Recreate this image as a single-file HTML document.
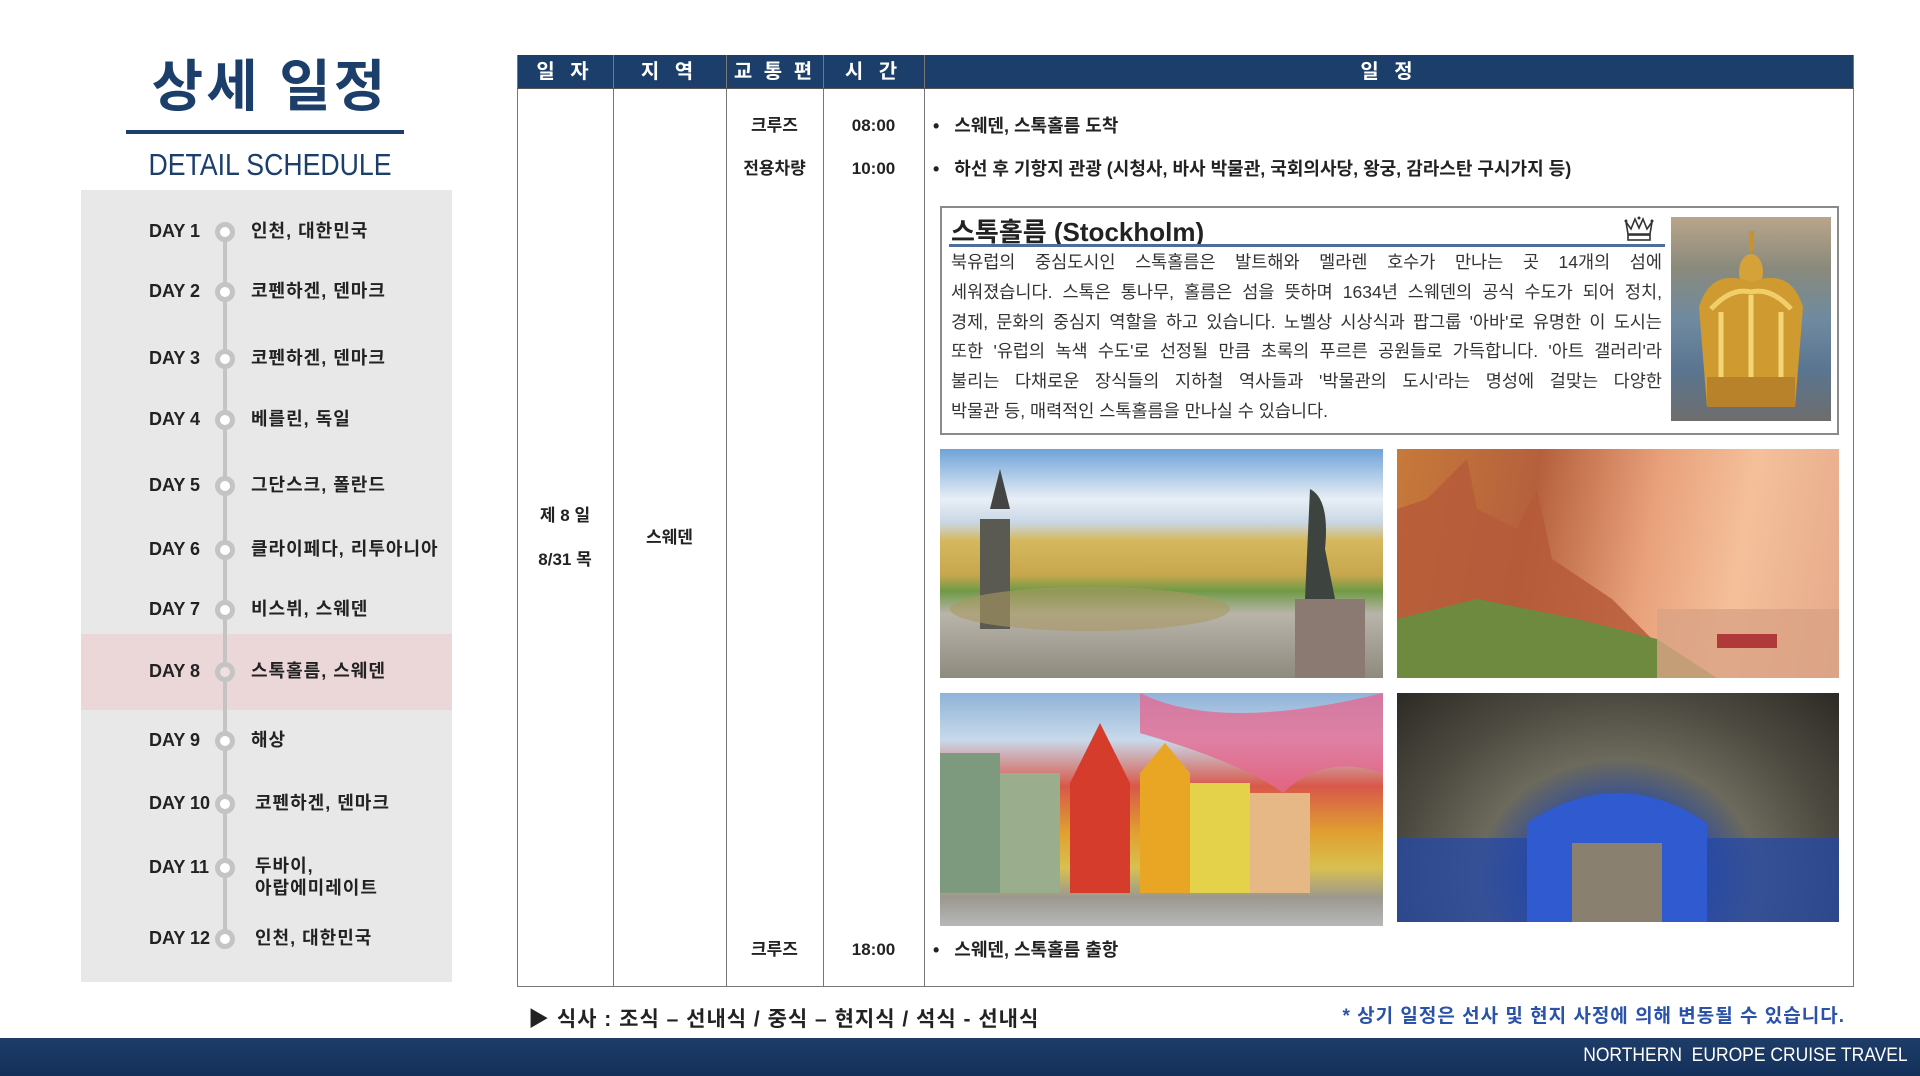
<!DOCTYPE html>
<html><head><meta charset="utf-8"><style>
*{margin:0;padding:0;box-sizing:border-box}
body{width:1920px;height:1076px;background:#fff;position:relative;overflow:hidden;font-family:"Liberation Sans","Noto Sans CJK KR",sans-serif;color:#222}
.a{position:absolute}
.title{left:60px;width:420px;top:52px;text-align:center;font-size:56px;font-weight:bold;color:#1c3e6a;letter-spacing:3px;line-height:70px}
.ul{left:126px;top:130px;width:278px;height:4px;background:#1c3e6a}
.sub{left:60px;width:420px;top:147px;text-align:center;font-size:31px;color:#1c3e6a;transform:scaleX(0.86);line-height:36px}
.panel{left:81px;top:190px;width:371px;height:792px;background:#e8e8e8}
.hl{left:81px;top:634px;width:371px;height:76px;background:#ebd6d8}
.vline{left:223px;top:231px;width:4px;height:707px;background:#c4c4c4}
.day{font-weight:bold;font-size:18px;color:#222;left:149px;line-height:24px}
.dot{width:20px;height:20px;border-radius:50%;border:5px solid #c4c4c4;background:#fff;left:215px}
.pl{font-weight:bold;font-size:18px;color:#222;letter-spacing:1px;line-height:24px}
.th{top:55px;height:34px;background:#1c3e6a;color:#fff;font-weight:bold;font-size:20px;text-align:center;line-height:34px;letter-spacing:5px}
.vl{width:1px;background:#777;top:55px;height:932px}
.c{font-weight:bold;font-size:17px;text-align:center;line-height:24px;height:24px}
.bul{font-weight:bold;font-size:18px;left:933px;line-height:24px}
.box{left:940px;top:206px;width:899px;height:229px;border:2px solid #8a8a8a}
.p{left:951px;top:248px;width:711px;font-size:17.5px;line-height:29.8px;color:#333}
.p div{text-align:justify;text-align-last:justify;white-space:nowrap}
.p div.l{text-align-last:left}
</style></head><body>
<div class="a title">상세 일정</div>
<div class="a ul"></div>
<div class="a sub">DETAIL SCHEDULE</div>
<div class="a panel"></div>
<div class="a hl"></div>
<div class="a vline"></div>

<div class="a day" style="top:219px">DAY 1</div><div class="a dot" style="top:222px"></div><div class="a pl" style="left:251px;top:219px">인천, 대한민국</div>
<div class="a day" style="top:279px">DAY 2</div><div class="a dot" style="top:282px"></div><div class="a pl" style="left:251px;top:279px">코펜하겐, 덴마크</div>
<div class="a day" style="top:346px">DAY 3</div><div class="a dot" style="top:349px"></div><div class="a pl" style="left:251px;top:346px">코펜하겐, 덴마크</div>
<div class="a day" style="top:407px">DAY 4</div><div class="a dot" style="top:410px"></div><div class="a pl" style="left:251px;top:407px">베를린, 독일</div>
<div class="a day" style="top:473px">DAY 5</div><div class="a dot" style="top:476px"></div><div class="a pl" style="left:251px;top:473px">그단스크, 폴란드</div>
<div class="a day" style="top:537px">DAY 6</div><div class="a dot" style="top:540px"></div><div class="a pl" style="left:251px;top:537px">클라이페다, 리투아니아</div>
<div class="a day" style="top:597px">DAY 7</div><div class="a dot" style="top:600px"></div><div class="a pl" style="left:251px;top:597px">비스뷔, 스웨덴</div>
<div class="a day" style="top:659px">DAY 8</div><div class="a dot" style="top:662px;background:#f3dede"></div><div class="a pl" style="left:251px;top:659px">스톡홀름, 스웨덴</div>
<div class="a day" style="top:728px">DAY 9</div><div class="a dot" style="top:731px"></div><div class="a pl" style="left:251px;top:728px">해상</div>
<div class="a day" style="top:791px">DAY 10</div><div class="a dot" style="top:794px"></div><div class="a pl" style="left:255px;top:791px">코펜하겐, 덴마크</div>
<div class="a day" style="top:855px">DAY 11</div><div class="a dot" style="top:858px"></div><div class="a pl" style="left:255px;top:855px;line-height:22px">두바이,<br>아랍에미레이트</div>
<div class="a day" style="top:926px">DAY 12</div><div class="a dot" style="top:929px"></div><div class="a pl" style="left:255px;top:926px">인천, 대한민국</div>

<div class="a th" style="left:517px;width:1337px"></div>
<div class="a th" style="left:517px;width:96px">일 자</div>
<div class="a th" style="left:613px;width:113px">지 역</div>
<div class="a th" style="left:726px;width:97px;letter-spacing:3px">교 통 편</div>
<div class="a th" style="left:823px;width:101px">시 간</div>
<div class="a th" style="left:924px;width:930px">일 정</div>
<div class="a vl" style="left:517px"></div>
<div class="a vl" style="left:613px"></div>
<div class="a vl" style="left:726px"></div>
<div class="a vl" style="left:823px"></div>
<div class="a vl" style="left:924px"></div>
<div class="a vl" style="left:1853px"></div>
<div class="a" style="left:517px;top:986px;width:1337px;height:1px;background:#777"></div>
<div class="a" style="left:517px;top:88px;width:1337px;height:1px;background:#555"></div>

<div class="a c" style="left:726px;width:97px;top:114px">크루즈</div>
<div class="a c" style="left:823px;width:101px;top:114px">08:00</div>
<div class="a bul" style="top:114px">•&nbsp;&nbsp; 스웨덴, 스톡홀름 도착</div>
<div class="a c" style="left:726px;width:97px;top:157px">전용차량</div>
<div class="a c" style="left:823px;width:101px;top:157px">10:00</div>
<div class="a bul" style="top:157px">•&nbsp;&nbsp; 하선 후 기항지 관광 (시청사, 바사 박물관, 국회의사당, 왕궁, 감라스탄 구시가지 등)</div>
<div class="a c" style="left:726px;width:97px;top:938px">크루즈</div>
<div class="a c" style="left:823px;width:101px;top:938px">18:00</div>
<div class="a bul" style="top:938px">•&nbsp;&nbsp; 스웨덴, 스톡홀름 출항</div>
<div class="a c" style="left:517px;width:96px;top:504px">제 8 일</div>
<div class="a c" style="left:517px;width:96px;top:548px">8/31 목</div>
<div class="a c" style="left:613px;width:113px;top:526px">스웨덴</div>

<div class="a box"></div>
<div class="a" style="left:951px;top:212px;font-size:26px;font-weight:bold;color:#222">스톡홀름 (Stockholm)</div>
<div class="a" style="left:949px;top:244px;width:716px;height:3px;background:#4f6d9c"></div>
<svg class="a" style="left:1623px;top:214px" width="32" height="28" viewBox="0 0 32 28"><path d="M3 8l5 7 4-10 4 9 4-9 4 10 5-7-2 12H5z" fill="none" stroke="#333" stroke-width="1.6"/><rect x="5" y="21" width="22" height="5" fill="none" stroke="#333" stroke-width="1.6"/><circle cx="3" cy="7" r="1.5" fill="#333"/><circle cx="29" cy="7" r="1.5" fill="#333"/><circle cx="16" cy="4" r="1.5" fill="#333"/></svg>
<div class="a" style="left:1671px;top:217px;width:160px;height:204px;background:linear-gradient(180deg,#b9a58a 0%,#8a8a7c 25%,#6f8aa0 50%,#5a7590 75%,#6d6d6d 100%)"></div>
<svg class="a" style="left:1671px;top:217px" width="160" height="204" viewBox="0 0 160 204"><rect x="78" y="14" width="5" height="20" fill="#c9922a"/><ellipse cx="80" cy="55" rx="12" ry="18" fill="#d5a23a"/><path d="M28 90 Q40 50 80 65 Q120 50 132 90 L124 190 H36 Z" fill="#cf9a30"/><path d="M40 92 Q60 70 80 75 Q100 70 120 92" fill="none" stroke="#f0cf6a" stroke-width="5"/><rect x="36" y="160" width="88" height="30" fill="#b8822a"/><path d="M50 95 V160 M80 78 V160 M110 95 V160" stroke="#f3d676" stroke-width="5"/></svg>
<div class="a p">
<div>북유럽의 중심도시인 스톡홀름은 발트해와 멜라렌 호수가 만나는 곳 14개의 섬에</div>
<div>세워졌습니다. 스톡은 통나무, 홀름은 섬을 뜻하며 1634년 스웨덴의 공식 수도가 되어 정치,</div>
<div>경제, 문화의 중심지 역할을 하고 있습니다. 노벨상 시상식과 팝그룹 '아바'로 유명한 이 도시는</div>
<div>또한 '유럽의 녹색 수도'로 선정될 만큼 초록의 푸르른 공원들로 가득합니다. '아트 갤러리'라</div>
<div>불리는 다채로운 장식들의 지하철 역사들과 '박물관의 도시'라는 명성에 걸맞는 다양한</div>
<div class="l">박물관 등, 매력적인 스톡홀름을 만나실 수 있습니다.</div>
</div>

<div class="a" style="left:940px;top:449px;width:443px;height:229px;background:linear-gradient(180deg,#6fa3d8 0%,#e8eef5 22%,#c9d7e6 32%,#d5b85e 40%,#c7a74e 55%,#6f9a45 62%,#b8b4aa 72%,#8f8a7e 100%)"></div>
<svg class="a" style="left:940px;top:449px" width="443" height="229"><rect x="40" y="70" width="30" height="110" fill="#5a5a52"/><path d="M60 20 l10 40 -20 0z" fill="#444"/><rect x="355" y="150" width="70" height="79" fill="#8a7a72"/><path d="M370 40 q20 10 15 60 l10 50 -30 0 z" fill="#3d4440"/><ellipse cx="150" cy="160" rx="140" ry="22" fill="#a89a62" opacity=".6"/></svg>
<div class="a" style="left:1397px;top:449px;width:442px;height:229px;background:linear-gradient(100deg,#c77a3a 0%,#b5603c 30%,#e8a07a 55%,#f4c09a 75%,#e6a98a 100%)"></div>
<svg class="a" style="left:1397px;top:449px" width="442" height="229"><path d="M0 229V60l30-10 40-40 10 50 40 20 20-40 15 70 60 40 40 40 0 39z" fill="#b65a3a" opacity=".85"/><path d="M0 229V170l80-20 100 20 80 20 60 39z" fill="#6d8a3e"/><rect x="260" y="160" width="182" height="69" fill="#d9a285" opacity=".8"/><rect x="320" y="185" width="60" height="14" fill="#b03a3a"/></svg>
<div class="a" style="left:940px;top:693px;width:443px;height:233px;background:linear-gradient(180deg,#8fb3d8 0%,#c8d9ea 20%,#d8584a 40%,#e0a030 60%,#d8c050 75%,#9a9890 88%,#b8b8b8 100%)"></div>
<svg class="a" style="left:940px;top:693px" width="443" height="233"><rect x="0" y="60" width="60" height="140" fill="#7d9a7e"/><rect x="60" y="80" width="60" height="120" fill="#9aae8e"/><path d="M130 200V90l30-60 30 60v110z" fill="#d63c2c"/><path d="M200 200V80l25-30 25 30v120z" fill="#e8a624"/><rect x="250" y="90" width="60" height="110" fill="#e4d24a"/><rect x="310" y="100" width="60" height="100" fill="#e6b885"/><path d="M200 0 q80 40 243 0 v80 q-60 -20 -100 20 q-40 -30 -143 -60z" fill="#e46a92" opacity=".8"/></svg>
<div class="a" style="left:1397px;top:693px;width:442px;height:229px;background:radial-gradient(ellipse at 50% 80%,#3a6ad0 0%,#2a4aa0 25%,#6c6a5c 45%,#4c4a40 70%,#2c2a24 100%)"></div>
<svg class="a" style="left:1397px;top:693px" width="442" height="229"><rect x="0" y="145" width="442" height="84" fill="#2448a8" opacity=".75"/><path d="M130 229V130q90-60 180 0v99z" fill="#2f5ad0"/><rect x="175" y="150" width="90" height="79" fill="#8a8070"/></svg>

<div class="a" style="left:528px;top:1003px;font-size:21px;font-weight:bold;color:#222;letter-spacing:1px">▶ 식사 : 조식 – 선내식 / 중식 – 현지식 / 석식 - 선내식</div>
<div class="a" style="right:75px;top:1001px;font-size:19px;font-weight:bold;color:#2a52a8;letter-spacing:1px">* 상기 일정은 선사 및 현지 사정에 의해 변동될 수 있습니다.</div>
<div class="a" style="left:0;top:1038px;width:1920px;height:38px;background:linear-gradient(180deg,#1e3d68,#12305a)"></div>
<div class="a" style="right:12px;top:1045px;font-size:19px;color:#fff;transform:scaleX(0.92);transform-origin:right center">NORTHERN&nbsp; EUROPE CRUISE TRAVEL</div>
</body></html>
